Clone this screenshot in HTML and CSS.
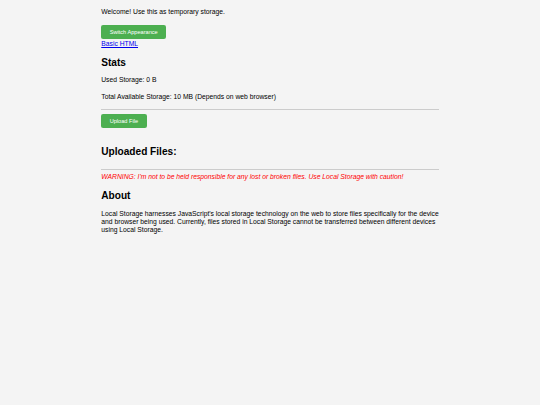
FILE: index.html
```html
<!DOCTYPE html>
<html lang="en">
<head>
<meta charset="utf-8">
<title>Local Storage</title>
<link rel="stylesheet" href="styles.css">
</head>
<body>
<div class="page">
  <main class="container">
    <p class="welcome">Welcome! Use this as temporary storage.</p>
    <button class="btn btn-switch" type="button">Switch Appearance</button>
    <a class="basic-link" href="#">Basic HTML</a>

    <h2 class="heading heading-stats">Stats</h2>
    <p class="stat stat-used">Used Storage: 0 B</p>
    <p class="stat stat-total">Total Available Storage: 10 MB (Depends on web browser)</p>
    <hr class="rule rule-top">
    <button class="btn btn-upload" type="button">Upload File</button>

    <h2 class="heading heading-files">Uploaded Files:</h2>
    <hr class="rule rule-files">
    <p class="warning">WARNING: I'm not to be held responsible for any lost or broken files. Use Local Storage with caution!</p>

    <h2 class="heading heading-about">About</h2>
    <p class="about">Local Storage harnesses JavaScript's local storage technology on the web to store files specifically for the device and browser being used. Currently, files stored in Local Storage cannot be transferred between different devices using Local Storage.</p>
  </main>
</div>
</body>
</html>
```

FILE: styles.css
```css
html, body {
  margin: 0;
  padding: 0;
  background: #f4f4f4;
}

.page {
  zoom: 0.421875;
  font-family: "Liberation Sans", Arial, sans-serif;
  font-size: 16px;
  color: #000;
  min-height: 960px;
}

.container {
  max-width: 800px;
  margin: 0 auto;
  padding-top: 19px;
  display: flex;
  flex-direction: column;
  align-items: flex-start;
}

.welcome {
  margin: 0;
  line-height: 18.4px;
}

.btn {
  font-family: "Liberation Sans", Arial, sans-serif;
  font-size: 13.333px;
  line-height: 15.33px;
  background: #4caf50;
  color: #fff;
  border: none;
  border-radius: 5px;
  padding: 9px 20px;
  cursor: pointer;
}

.btn-switch {
  margin-top: 22px;
}

.basic-link {
  color: #0000ee;
  text-decoration: underline;
  line-height: 18.4px;
  margin-top: 2px;
}

.heading {
  font-size: 24px;
  font-weight: bold;
  line-height: 27.6px;
  margin: 0;
}

.heading-stats {
  margin-top: 22px;
}

.stat {
  margin: 0;
  line-height: 18.4px;
}

.stat-used {
  margin-top: 18px;
}

.stat-total {
  margin-top: 21px;
}

.rule {
  align-self: stretch;
  height: 0;
  border: none;
  border-top: 2px solid #cccccc;
  margin: 0;
}

.rule-top {
  margin-top: 19px;
}

.btn-upload {
  margin-top: 11px;
}

.heading-files {
  margin-top: 41px;
}

.rule-files {
  margin-top: 28px;
}

.warning {
  margin: 7px 0 0;
  line-height: 18.4px;
  color: #ff0000;
  font-style: italic;
}

.heading-about {
  margin-top: 22px;
}

.about {
  margin: 20px 0 0;
  line-height: 18.4px;
}
```
